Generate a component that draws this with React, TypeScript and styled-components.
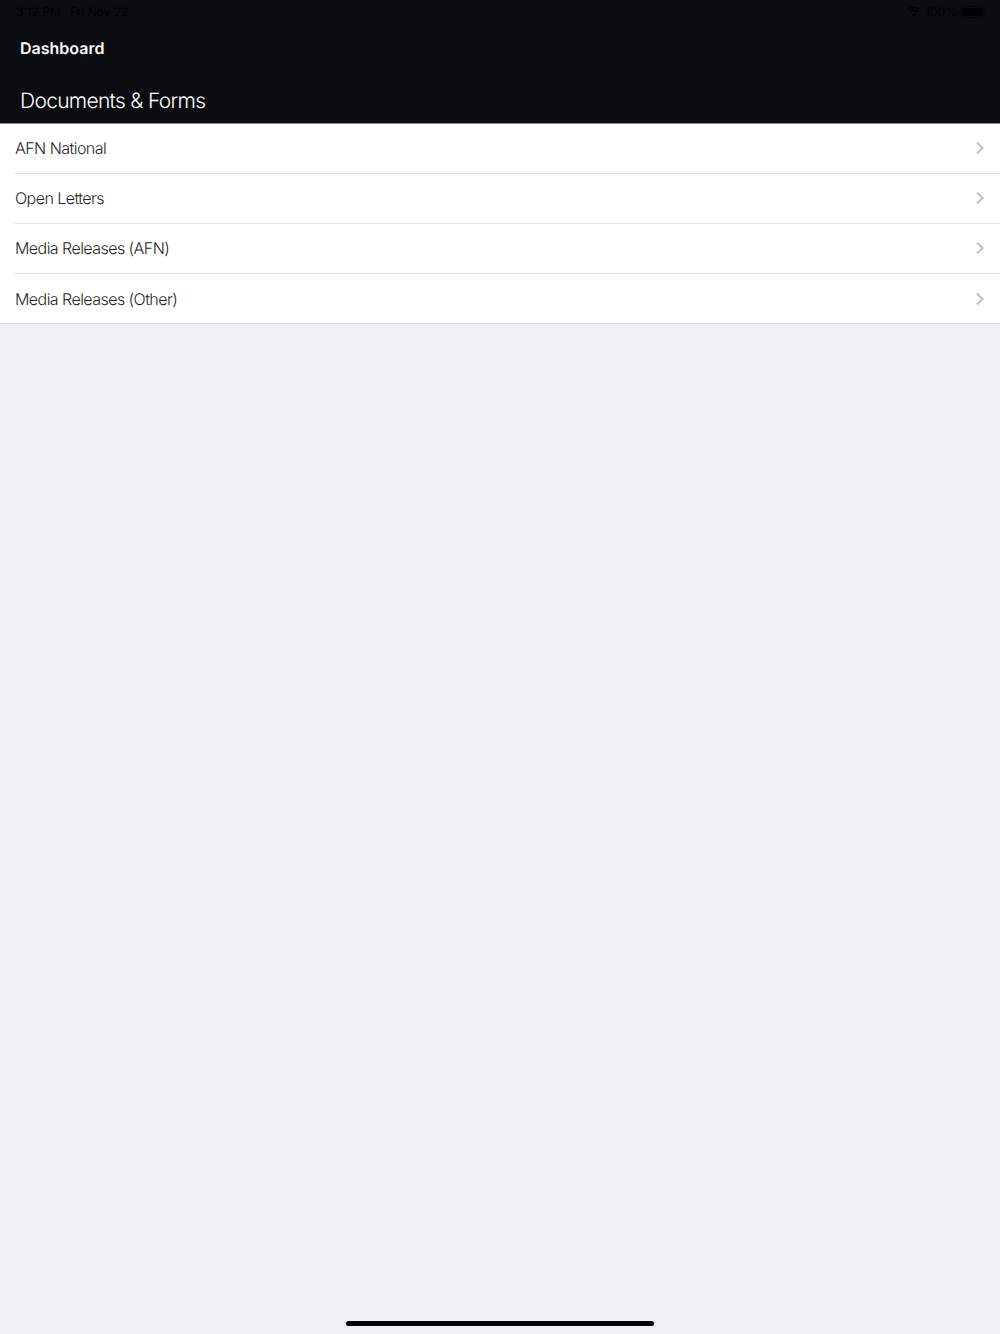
import styled, { createGlobalStyle } from "styled-components";

const GlobalStyle = createGlobalStyle`
  html, body {
    margin: 0;
    padding: 0;
    background: #efeff4;
    font-family: Inter, "Liberation Sans", sans-serif;
    text-rendering: geometricPrecision;
  }
`;

const Screen = styled.div`
  width: 1000px;
  height: 1334px;
  background: #efeff4;
  display: flex;
  flex-direction: column;
  overflow: hidden;
`;

const Header = styled.header`
  height: 123px;
  background: #0b0c0f;
  border-bottom: 1px solid #8a8a8c;
  display: flex;
  flex-direction: column;
`;

const StatusBar = styled.div`
  height: 23px;
  padding: 0 15px 0 16px;
  display: flex;
  align-items: center;
  justify-content: space-between;
  color: #000;
  font-size: 12px;
`;

const StatusGroup = styled.div`
  display: flex;
  align-items: center;
  gap: ${({ $gap }: { $gap: number }) => $gap}px;
`;

const Battery = styled.div`
  width: 20px;
  height: 8px;
  padding: 1px;
  border: 1px solid #050506;
  border-radius: 3px;
  position: relative;

  &::before {
    content: "";
    display: block;
    height: 100%;
    background: #000;
    border-radius: 1px;
  }

  &::after {
    content: "";
    position: absolute;
    right: -3px;
    top: 2px;
    width: 1px;
    height: 4px;
    background: #050506;
    border-radius: 0 1px 1px 0;
  }
`;

const BackLabel = styled.div`
  margin-top: 15px;
  padding-left: 20px;
  height: 20px;
  line-height: 20px;
  color: #fff;
  font-size: 16px;
  font-weight: 600;
`;

const Title = styled.h1`
  margin: 30px 0 0;
  padding-left: 20px;
  color: #fff;
  font-size: 21px;
  font-weight: 300;
  letter-spacing: -0.7px;
  line-height: 28px;
`;

const List = styled.ul`
  list-style: none;
  margin: 0;
  padding: 0 0 0 15px;
  background: #fff;
  border-bottom: 1px solid #dcdce0;
`;

const Row = styled.li<{ $last?: boolean }>`
  height: ${({ $last }) => ($last ? "49px" : "50px")};
  padding: ${({ $last }) => ($last ? "1px 15px 0 0" : "0 15px 2px 0")};
  display: flex;
  align-items: center;
  justify-content: space-between;
  color: #1f1f21;
  font-size: 16px;
  font-weight: 300;
  letter-spacing: -0.55px;
  box-sizing: border-box;
  border-bottom: ${({ $last }) => ($last ? "none" : "1px solid #dfdfe2")};
`;

const HomeBar = styled.div`
  width: 308px;
  height: 5px;
  border-radius: 3px;
  background: #000;
  margin: auto auto 8px;
`;

const rows = [
  "AFN National",
  "Open Letters",
  "Media Releases (AFN)",
  "Media Releases (Other)",
];

function Chevron() {
  return (
    <svg width="10" height="14" viewBox="0 0 10 14" fill="none">
      <path d="M2 1.500 7.500 7 2 12.500" stroke="#c4c4c7" strokeWidth="2.200" />
    </svg>
  );
}

function Wifi() {
  return (
    <svg width="14" height="11" viewBox="0 0 14 11" fill="#000">
      <path d="M7 2.200c2 0 3.800.8 5.100 2L13.400 3A9.500 9.500 0 0 0 .6 3l1.300 1.200A7.400 7.400 0 0 1 7 2.200Z" />
      <path d="M7 5.200c1.200 0 2.200.4 3 1.200l1.200-1.200A6.200 6.200 0 0 0 2.800 5.200L4 6.400a4.300 4.300 0 0 1 3-1.200Z" />
      <path d="M7 10.500 9 8.200a2.900 2.900 0 0 0-4 0l2 2.300Z" />
    </svg>
  );
}

export default function App() {
  return (
    <Screen>
      <GlobalStyle />
      <Header>
        <StatusBar>
          <StatusGroup $gap={9}>
            <span>3:12 PM</span>
            <span>Fri Nov 22</span>
          </StatusGroup>
          <StatusGroup $gap={4}>
            <Wifi />
            <span>100%</span>
            <Battery />
          </StatusGroup>
        </StatusBar>
        <BackLabel>Dashboard</BackLabel>
        <Title>Documents &amp; Forms</Title>
      </Header>
      <List>
        {rows.map((label, i) => (
          <Row key={label} $last={i === rows.length - 1}>
            {label}
            <Chevron />
          </Row>
        ))}
      </List>
      <HomeBar />
    </Screen>
  );
}
